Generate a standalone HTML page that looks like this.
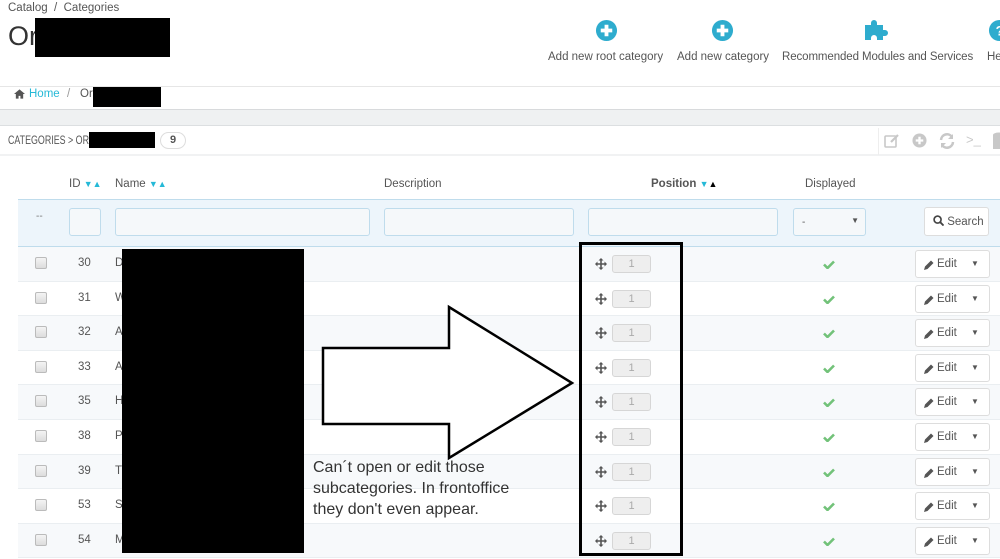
<!DOCTYPE html>
<html><head><meta charset="utf-8">
<style>
*{box-sizing:border-box;margin:0;padding:0}
body{width:1000px;height:559px;overflow:hidden;background:#fff;font-family:"Liberation Sans",sans-serif;color:#555;position:relative;font-size:11.5px}
.a{position:absolute}
.blk{position:absolute;background:#000}
.row{position:absolute;left:18px;width:982px;height:34.6px;border-bottom:1px solid #eaeef1}
.row.alt{background:#f7f9fb}
.cb{position:absolute;left:17px;top:10px;width:12px;height:12px;border:1px solid #bbb;border-radius:2px;background:linear-gradient(#f4f4f4,#dcdcdc)}
.id{position:absolute;left:60px;top:10px;font-size:11.5px;color:#555}
.nm{position:absolute;left:97px;top:10px;font-size:11.5px;color:#555}
.pi{position:absolute;left:594px;top:8px;width:39px;height:18px;border:1px solid #d6d6d6;border-radius:3px;background:#eee;color:#aaa;text-align:center;font-size:11px;line-height:16px}
.ed{position:absolute;left:897px;top:3px;width:75px;height:28px;border:1px solid #ddd;border-radius:3px;background:#fff;font-size:11.5px;color:#555}
.inp{position:absolute;top:208px;height:28px;border:1px solid #bfdcec;border-radius:3px;background:#f5f8fa}
</style></head><body>

<div class="a" style="left:8px;top:2px;font-size:11.5px;color:#555">Catalog &nbsp;/&nbsp; Categories</div>
<div class="a" style="left:8px;top:21px;font-size:27px;color:#333">Or</div>
<div class="blk" style="left:35px;top:18px;width:135px;height:39px"></div>

<svg class="a" style="left:595px;top:19px" width="23" height="23" viewBox="0 0 24 24"><circle cx="12" cy="12" r="11" fill="#2eacce"/><path d="M12 6v12M6 12h12" stroke="#fff" stroke-width="4"/></svg>
<div class="a" style="left:548px;top:51px;font-size:11.5px;color:#555">Add new root category</div>
<svg class="a" style="left:711px;top:19px" width="23" height="23" viewBox="0 0 24 24"><circle cx="12" cy="12" r="11" fill="#2eacce"/><path d="M12 6v12M6 12h12" stroke="#fff" stroke-width="4"/></svg>
<div class="a" style="left:677px;top:51px;font-size:11.5px;color:#555">Add new category</div>
<svg class="a" style="left:864px;top:17px" width="26" height="24" viewBox="0 0 26 24"><path d="M1 8h6v-2a3 3 0 1 1 6 0v2h6v5h2a3 3 0 1 1 0 6h-2v4h-6v-2a3 3 0 1 0-6 0v2H1z" fill="#2eacce"/></svg>
<div class="a" style="left:782px;top:51px;font-size:11.5px;color:#555;letter-spacing:-0.1px">Recommended Modules and Services</div>
<svg class="a" style="left:988px;top:19px" width="23" height="23" viewBox="0 0 24 24"><circle cx="12" cy="12" r="11" fill="#2eacce"/><text x="8" y="17" fill="#fff" font-size="14" font-weight="bold" font-family="Liberation Sans">?</text></svg>
<div class="a" style="left:987px;top:51px;font-size:11.5px;color:#555">He</div>

<div class="a" style="left:0;top:86px;width:1000px;height:24px;border-top:1px solid #e6e6e6;border-bottom:1px solid #d8dadc;background:#fff"></div>
<svg class="a" style="left:14px;top:89px" width="11" height="10" viewBox="0 0 12 10"><path d="M6 0L0 5h2v5h3V7h2v3h3V5h2z" fill="#555"/></svg>
<div class="a" style="left:29px;top:88px;font-size:11.5px;color:#25b9d7">Home</div>
<div class="a" style="left:67px;top:88px;font-size:11.5px;color:#999">/</div>
<div class="a" style="left:80px;top:88px;font-size:11.5px;color:#555">Or</div>
<div class="blk" style="left:93px;top:87px;width:68px;height:20px"></div>
<div class="a" style="left:0;top:110px;width:1000px;height:16px;background:#eff1f2;border-bottom:1px solid #dcdfe1"></div>

<div class="a" style="left:0;top:126px;width:1000px;height:30px;background:#fff;border-bottom:2px solid #f1f2f3"></div>
<div class="a" style="left:8px;top:133px;font-size:12px;color:#555;transform:scaleX(0.74);transform-origin:0 0;white-space:nowrap">CATEGORIES &gt; OR</div>
<div class="blk" style="left:89px;top:132px;width:66px;height:16px"></div>
<div class="a" style="left:160px;top:132px;width:26px;height:17px;border:1px solid #ddd;border-radius:9px;text-align:center;font-weight:bold;font-size:11px;line-height:15px;color:#555">9</div>
<div class="a" style="left:878px;top:128px;width:122px;height:27px;border-left:1px solid #eee"></div>
<svg class="a" style="left:884px;top:133px" width="16" height="16" viewBox="0 0 16 16"><rect x="1" y="3" width="11" height="11" rx="1" fill="none" stroke="#c8c8c8" stroke-width="1.6"/><path d="M7 9l7-7" stroke="#c8c8c8" stroke-width="2.2"/></svg>
<svg class="a" style="left:912px;top:133px" width="15" height="15" viewBox="0 0 16 16"><circle cx="8" cy="8" r="7.5" fill="#c8c8c8"/><path d="M8 4v8M4 8h8" stroke="#fff" stroke-width="2.5"/></svg>
<svg class="a" style="left:939px;top:133px" width="16" height="16" viewBox="0 0 16 16"><path d="M2 7a6 6 0 0 1 11-3M14 9a6 6 0 0 1-11 3" fill="none" stroke="#c8c8c8" stroke-width="2.5"/><path d="M14 1v5h-5zM2 15v-5h5z" fill="#c8c8c8"/></svg>
<div class="a" style="left:966px;top:132px;font-size:13px;color:#c8c8c8">&gt;_</div>
<svg class="a" style="left:993px;top:132px" width="10" height="18" viewBox="0 0 10 18"><ellipse cx="6" cy="3" rx="6" ry="2.5" fill="#c8c8c8"/><rect x="0" y="3" width="12" height="14" fill="#c8c8c8"/></svg>

<div class="a" style="left:69px;top:178px;font-size:11.5px;color:#555">ID <span style="color:#25b9d7;font-size:9px">▼▲</span></div>
<div class="a" style="left:115px;top:178px;font-size:11.5px;color:#555">Name <span style="color:#25b9d7;font-size:9px">▼▲</span></div>
<div class="a" style="left:384px;top:178px;font-size:11.5px;color:#555">Description</div>
<div class="a" style="left:651px;top:178px;font-size:11.5px;color:#555;font-weight:bold">Position <span style="color:#25b9d7;font-size:9px;font-weight:normal">▼</span><span style="color:#000;font-size:9px;font-weight:normal">▲</span></div>
<div class="a" style="left:805px;top:178px;font-size:11.5px;color:#555">Displayed</div>

<div class="a" style="left:18px;top:199px;width:982px;height:48px;background:#edf5fb;border-top:1px solid #bfdcec;border-bottom:1px solid #bfdcec"></div>
<div class="a" style="left:36px;top:211px;font-size:10px;color:#777">--</div>
<div class="inp" style="left:69px;width:32px"></div>
<div class="inp" style="left:115px;width:255px"></div>
<div class="inp" style="left:384px;width:190px"></div>
<div class="inp" style="left:588px;width:190px"></div>
<div class="inp" style="left:793px;width:73px;font-size:10px;color:#555;padding:8px 8px"><span>-</span><span style="position:absolute;right:6px;top:7px;font-size:8px">▼</span></div>
<div class="a" style="left:924px;top:207px;width:65px;height:29px;border:1px solid #ddd;border-radius:3px;background:#fff;font-size:11.5px;color:#555;padding:7px 0 0 8px;white-space:nowrap">
<svg width="11" height="11" viewBox="0 0 12 12" style="vertical-align:-1px"><circle cx="5" cy="5" r="3.8" fill="none" stroke="#444" stroke-width="1.8"/><path d="M8 8l3.5 3.5" stroke="#444" stroke-width="2"/></svg> Search</div>

<div class="row alt" style="top:247px"><div class="cb"></div><div class="id">30</div><div class="nm">D</div></div>
<div class="row" style="top:281.6px"><div class="cb"></div><div class="id">31</div><div class="nm">W</div></div>
<div class="row alt" style="top:316.2px"><div class="cb"></div><div class="id">32</div><div class="nm">A</div></div>
<div class="row" style="top:350.8px"><div class="cb"></div><div class="id">33</div><div class="nm">A</div></div>
<div class="row alt" style="top:385.4px"><div class="cb"></div><div class="id">35</div><div class="nm">H</div></div>
<div class="row" style="top:420px"><div class="cb"></div><div class="id">38</div><div class="nm">P</div></div>
<div class="row alt" style="top:454.6px"><div class="cb"></div><div class="id">39</div><div class="nm">T</div></div>
<div class="row" style="top:489.2px"><div class="cb"></div><div class="id">53</div><div class="nm">S</div></div>
<div class="row alt" style="top:523.8px"><div class="cb"></div><div class="id">54</div><div class="nm">M</div></div>

<div id="cells"></div>
<script>
var h='';
for(var i=0;i<9;i++){var t=247+i*34.6;
h+='<div class="a" style="left:0;top:'+t+'px;width:1000px;height:34px">'+
'<svg class="a" style="left:595px;top:11px" width="12" height="12" viewBox="0 0 12 12"><path d="M6 0L3.5 2.5h1.7v2.7H2.5V3.5L0 6l2.5 2.5V6.8h2.7v2.7H3.5L6 12l2.5-2.5H6.8V6.8h2.7v1.7L12 6 9.5 3.5v1.7H6.8V2.5h1.7z" fill="#555"/></svg>'+
'<div class="pi" style="left:612px">1</div>'+
'<svg class="a" style="left:823px;top:13px" width="12" height="9" viewBox="0 0 12 9"><path d="M1 4.5l3.5 3.5L11 1.5" fill="none" stroke="#72c279" stroke-width="2.6"/></svg>'+
'<div class="ed" style="left:915px"><svg class="a" style="left:8px;top:9px" width="10" height="10" viewBox="0 0 10 10"><path d="M0 10l1-3.5 6-6 2.5 2.5-6 6z" fill="#555"/></svg><span class="a" style="left:21px;top:7px">Edit</span><span class="a" style="left:55px;top:8px;font-size:8px">▼</span></div>'+
'</div>';}
document.getElementById('cells').innerHTML=h;
</script>

<div class="blk" style="left:122px;top:249px;width:182px;height:304px"></div>

<div class="a" style="left:579px;top:242px;width:104px;height:314px;border:3px solid #000"></div>

<svg class="a" style="left:0;top:0" width="1000" height="559"><path d="M323 348H449V307L572 383L449 458V424H323Z" fill="#fff" stroke="#000" stroke-width="2.5"/></svg>

<div class="a" style="left:313px;top:457px;font-size:16px;line-height:21px;color:#333">Can´t open or edit those<br>subcategories. In frontoffice<br>they don't even appear.</div>

</body></html>
